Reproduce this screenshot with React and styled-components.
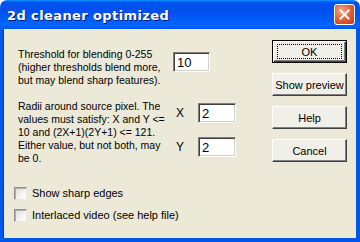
import React from 'react'
import styled, { createGlobalStyle } from 'styled-components'

const GlobalStyle = createGlobalStyle`
    html, body {
        margin: 0;
        padding: 0;
        background: #ffffff;
    }
`

const Janela = styled.div`
    width: 360px;
    height: 242px;
    display: flex;
    flex-direction: column;
    font-family: "Liberation Sans", Arial, sans-serif;
    font-size: 10.5px;
    color: #000000;
    overflow: hidden;
`

const BarraTitulo = styled.div`
    height: 29px;
    flex: none;
    display: flex;
    align-items: center;
    justify-content: space-between;
    padding: 0 5px 0 7px;
    box-sizing: border-box;
    border-radius: 7px 7px 0 0;
    background: linear-gradient(to bottom, #0997ff 0%, #0053ee 8%, #0050ee 40%, #0066ff 88%, #0055ea 100%);
`

const Titulo = styled.span`
    color: #ffffff;
    font-family: "DejaVu Sans", Verdana, sans-serif;
    font-weight: bold;
    font-size: 13px;
    letter-spacing: 0.4px;
    text-shadow: 1px 1px #0a1883;
    margin-top: 1px;
`

const BotaoFechar = styled.div`
    width: 21px;
    height: 21px;
    box-sizing: border-box;
    border: 1px solid #ffffff;
    border-radius: 3px;
    background: radial-gradient(circle at 35% 30%, #f3a48a 0%, #e25a2e 55%, #c23c13 100%);
    display: flex;
    align-items: center;
    justify-content: center;
`

const Corpo = styled.div`
    flex: 1;
    display: flex;
    background: #ece9d8;
    border-left: 3px solid #0055ea;
    border-right: 4px solid #0055ea;
    border-bottom: 4px solid #0055ea;
    box-shadow: inset 1px 0 #0831d9;
`

const ColunaEsquerda = styled.div`
    flex: 1;
    padding: 19px 0 0 15px;
    display: flex;
    flex-direction: column;
`

const Linha = styled.div`
    display: flex;
    align-items: flex-start;
    margin-bottom: ${props => props.espaco || 0}px;
`

const Texto = styled.div`
    width: ${props => props.largura}px;
    line-height: 13px;
`

const CampoGrupo = styled.div`
    display: grid;
    grid-template-columns: 22px 38px;
    row-gap: 14px;
    align-items: center;
    align-content: start;
    padding-top: 3px;
    padding-left: ${props => props.recuo || 0}px;
`

const Rotulo = styled.span`
    font-size: 12px;
    line-height: 14px;
`

const Entrada = styled.input`
    width: ${props => props.largura || 38}px;
    height: 20px;
    box-sizing: border-box;
    margin: ${props => props.topo || 0}px 0 0 0;
    padding: 1px 3px 0;
    font-family: "Liberation Sans", Arial, sans-serif;
    font-size: 13px;
    background: #ffffff;
    border: 1px solid;
    border-color: #808080 #ffffff #ffffff #808080;
    box-shadow: inset 1px 1px #404040, inset -1px -1px #d4d0c8;
    outline: none;
`

const Caixa = styled.label`
    display: flex;
    align-items: center;
    gap: 5px;
    margin-left: -4px;
    margin-top: ${props => props.topo}px;
    line-height: 13px;
    font-size: 11px;
`

const Quadrado = styled.span`
    width: 13px;
    height: 13px;
    box-sizing: border-box;
    border: 1px solid;
    border-color: #8f8f8f #e8e8e0 #e8e8e0 #8f8f8f;
    background: linear-gradient(135deg, #dcdcd4 0%, #f4f4f0 60%, #ffffff 100%);
    box-shadow: inset 1px 1px #b0b0a8;
`

const ColunaDireita = styled.div`
    width: 75px;
    padding: 11px 9px 0 0;
    display: flex;
    flex-direction: column;
    gap: 10px;
`

const Botao = styled.div`
    height: 23px;
    box-sizing: border-box;
    display: flex;
    align-items: center;
    justify-content: center;
    background: #f0efe8;
    font-size: 11px;
    border: 1px solid;
    border-color: ${props => props.padrao ? '#000000' : '#ffffff #404040 #404040 #ffffff'};
    box-shadow: ${props => props.padrao
        ? 'inset 1px 1px #ffffff, inset -1px -1px #404040, inset -2px -2px #808080'
        : 'inset -1px -1px #808080'};
`

const Foco = styled.span`
    border: 1px dotted #000000;
    width: 65px;
    height: 15px;
    box-sizing: border-box;
    display: flex;
    align-items: center;
    justify-content: center;
`

export default function App() {
    return (
        <>
            <GlobalStyle />
            <Janela>
                <BarraTitulo>
                    <Titulo>2d cleaner optimized</Titulo>
                    <BotaoFechar>
                        <svg width="11" height="11" viewBox="0 0 11 11">
                            <path d="M1.5 1.5 L9.5 9.5 M9.5 1.5 L1.5 9.5" stroke="#ffffff" strokeWidth="2" strokeLinecap="square" />
                        </svg>
                    </BotaoFechar>
                </BarraTitulo>
                <Corpo>
                    <ColunaEsquerda>
                        <Linha espaco={13}>
                            <Texto largura={155}>
                                Threshold for blending 0-255<br />
                                (higher thresholds blend more,<br />
                                but may blend sharp features).
                            </Texto>
                            <Entrada largura={37} topo={4} defaultValue="10" />
                        </Linha>
                        <Linha>
                            <Texto largura={158}>
                                Radii around source pixel. The<br />
                                values must satisfy: X and Y &lt;=<br />
                                10 and (2X+1)(2Y+1) &lt;= 121.<br />
                                Either value, but not both, may<br />
                                be 0.
                            </Texto>
                            <CampoGrupo>
                                <Rotulo>X</Rotulo>
                                <Entrada defaultValue="2" />
                                <Rotulo>Y</Rotulo>
                                <Entrada defaultValue="2" />
                            </CampoGrupo>
                        </Linha>
                        <Caixa topo={22}>
                            <Quadrado />
                            Show sharp edges
                        </Caixa>
                        <Caixa topo={9}>
                            <Quadrado />
                            Interlaced video (see help file)
                        </Caixa>
                    </ColunaEsquerda>
                    <ColunaDireita>
                        <Botao padrao><Foco>OK</Foco></Botao>
                        <Botao>Show preview</Botao>
                        <Botao>Help</Botao>
                        <Botao>Cancel</Botao>
                    </ColunaDireita>
                </Corpo>
            </Janela>
        </>
    )
}
